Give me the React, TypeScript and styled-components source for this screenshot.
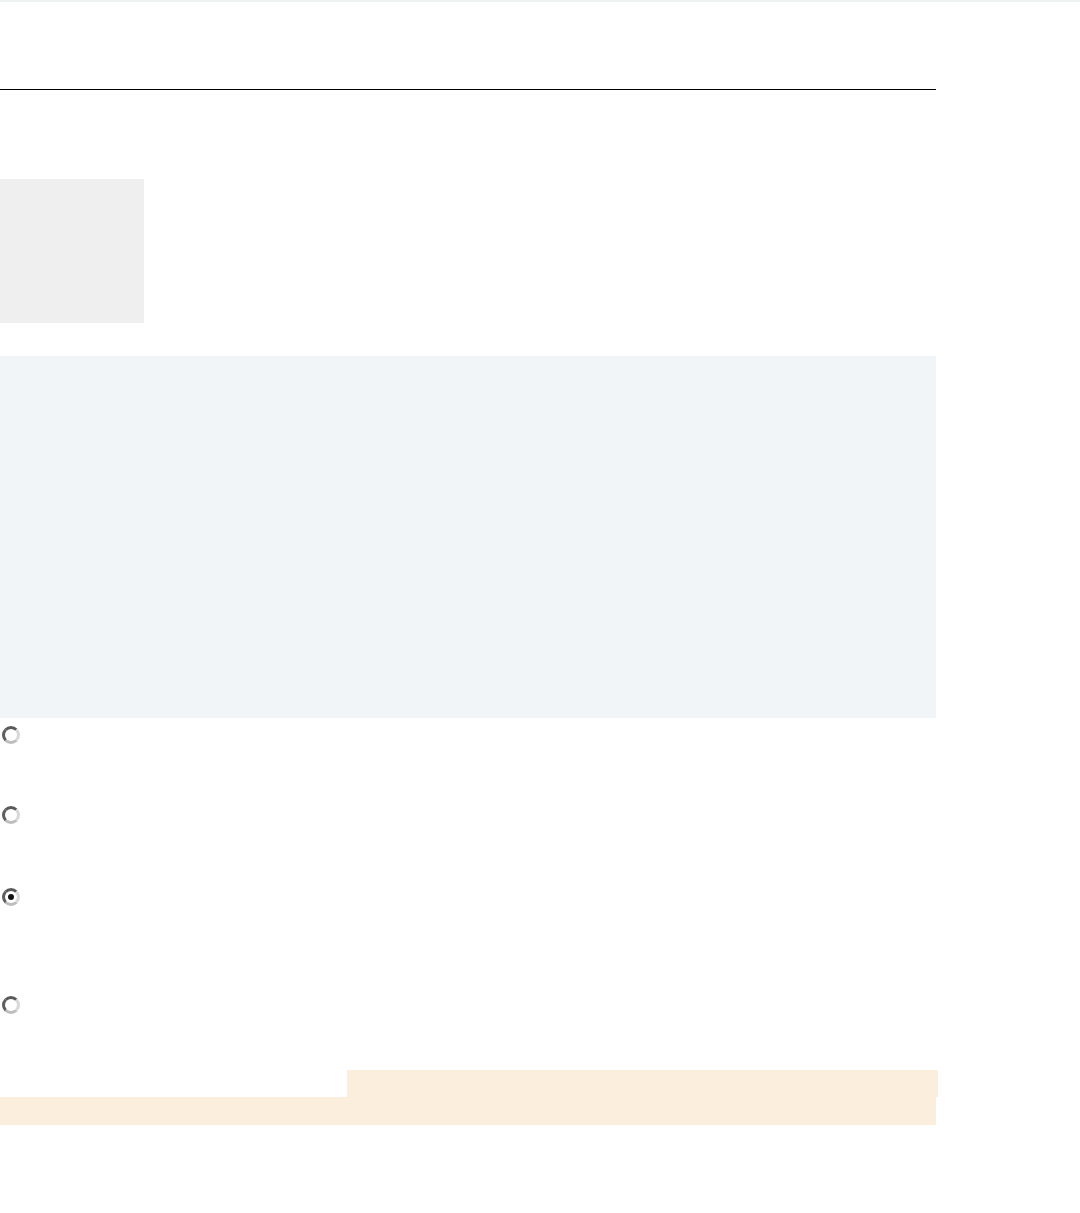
import React from "react";
import styled, { createGlobalStyle } from "styled-components";

const Global = createGlobalStyle`
  html, body { margin: 0; padding: 0; background: #ffffff; }
  body { font-family: "Liberation Sans", Arial, sans-serif; color: #222; }
`;

const TopStrip = styled.div`
  height: 2px;
  background: #eef2f2;
`;

const Page = styled.main`
  width: 936px;
  display: flex;
  flex-direction: column;
`;

const Header = styled.header`
  height: 87px;
  border-bottom: 1px solid #000;
`;

const Thumb = styled.div`
  margin-top: 89px;
  width: 144px;
  height: 144px;
  background: #efefef;
`;

const Panel = styled.section`
  margin-top: 33px;
  height: 362px;
  background: #f2f5f8;
`;

const Options = styled.div`
  display: flex;
  flex-direction: column;
  padding-top: 8px;
`;

const OptionRow = styled.label<{ $h: number }>`
  display: flex;
  align-items: flex-start;
  height: ${(p) => p.$h}px;
  padding-left: 2px;
`;

const Radio = styled.input.attrs({ type: "radio" })`
  appearance: none;
  -webkit-appearance: none;
  margin: 0;
  width: 18px;
  height: 18px;
  box-sizing: border-box;
  border-radius: 50%;
  border: 3px solid;
  border-color: #5a5a5a #d8d8d8 #bdbdbd #5e5e5e;
  background: #fff;
  position: relative;
  &:checked::after {
    content: "";
    position: absolute;
    left: 3px;
    top: 3px;
    width: 6px;
    height: 6px;
    border-radius: 50%;
    background: #111;
  }
`;

const Highlight = styled.div`
  display: flex;
  flex-direction: column;
  margin-top: 56px;
`;

const HighlightLine = styled.div<{ $indent: number; $w: number; $h: number }>`
  margin-left: ${(p) => p.$indent}px;
  width: ${(p) => p.$w}px;
  height: ${(p) => p.$h}px;
  background: #fbeedc;
`;

const options = [
  { h: 80, checked: false },
  { h: 82, checked: false },
  { h: 108, checked: true },
  { h: 18, checked: false },
];

export default function App() {
  return (
    <>
      <Global />
      <TopStrip />
      <Page>
        <Header />
        <Thumb />
        <Panel />
        <Options>
          {options.map((o, i) => (
            <OptionRow key={i} $h={o.h}>
              <Radio name="choice" defaultChecked={o.checked} />
            </OptionRow>
          ))}
        </Options>
        <Highlight>
          <HighlightLine $indent={347} $w={591} $h={27} />
          <HighlightLine $indent={0} $w={936} $h={28} />
        </Highlight>
      </Page>
    </>
  );
}
